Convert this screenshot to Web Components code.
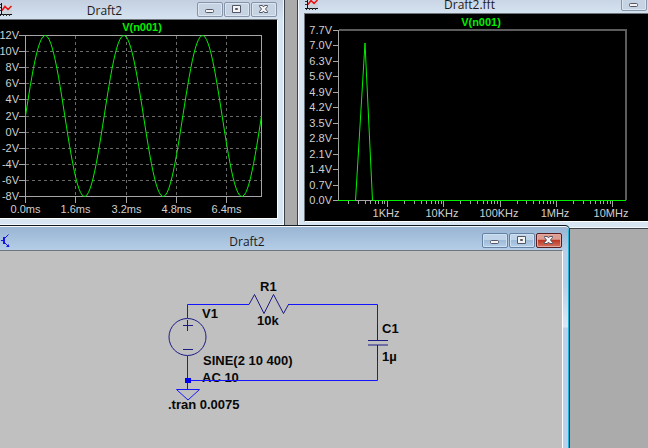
<!DOCTYPE html>
<html lang="en">
<head>
<meta charset="utf-8">
<title>Circuit simulator</title>
<style>
  body { margin: 0; }
</style>
</head>
<body>
<sim-desktop>
  <mdi-window class="wave" caption="Draft2">
    <chart-icon slot="icon"></chart-icon>
    <wave-plot></wave-plot>
  </mdi-window>
  <mdi-window class="fft" caption="Draft2.fft">
    <chart-icon slot="icon"></chart-icon>
    <fft-plot></fft-plot>
  </mdi-window>
  <mdi-window class="schematic" caption="Draft2" active>
    <transistor-icon slot="icon"></transistor-icon>
    <circuit-schematic></circuit-schematic>
  </mdi-window>
</sim-desktop>

<script>
const attach = (el, html) => { el.attachShadow({ mode: 'open' }).innerHTML = html; };

/* Desktop: overlapping windows on a free canvas */
customElements.define('sim-desktop', class extends HTMLElement {
  constructor() {
    super();
    attach(this, `<style>
      :host { display: block; position: relative; height: 100vh; overflow: hidden; background: #ababab; }
      ::slotted(mdi-window) { position: absolute; }
      ::slotted(.wave) { left: -9px; top: -6px; width: 294px; height: 232px; }
      ::slotted(.fft) { left: 297px; top: -12px; width: 412px; height: 241px; }
      ::slotted(.schematic) { left: -9px; top: 225px; width: 579px; bottom: -16px; }
    </style><slot></slot>`);
  }
});

customElements.define('caption-button', class extends HTMLElement {
  connectedCallback() {
    if (this.shadowRoot) return;
    const kind = this.getAttribute('kind');
    const shapes = {
      minimize: '<rect x="8.5" y="7.5" width="8" height="3" rx="1"/>',
      maximize: '<path fill-rule="evenodd" d="M8.5 3.5h8v7h-8zM11.5 6.5v1h2v-1z"/>',
      close: '<path d="M8.5 3.5h3l1 1.5 1-1.5h3v1L14.500 7l2 2.500v1h-3l-1-1.500-1 1.500h-3v-1l2-2.500-2-2.500z"/>'
    };
    attach(this, `<style>
      :host { display: block; }
      button { display: block; box-sizing: border-box; width: 26px; height: 15px; padding: 0;
        border: 1px solid #8793a9; border-radius: 2px; background: #c6d3e3;
        box-shadow: inset 0 0 0 1px #dce6f1; }
      :host([active]) button { border-color: #6481a4; background: linear-gradient(#bfd4e9 45%, #9ebbd8 50%, #b5cfe8);
        box-shadow: inset 0 0 0 1px #cfe0f0; }
      :host([active][kind=close]) button { border-color: #571d20; background: linear-gradient(#dd9d91 40%, #bd3825 50%, #d47460);
        box-shadow: inset 0 0 0 1px #e2a99f; }
      svg { display: block; margin: -1px; width: 26px; height: 15px; fill: #f4f4f4; stroke: #535666; }
    </style>
    <button type="button" aria-label="${kind}"><svg viewBox="0 0 26 15">${shapes[kind]}</svg></button>`);
  }
});

customElements.define('mdi-window', class extends HTMLElement {
  connectedCallback() {
    if (this.shadowRoot) return;
    const active = this.hasAttribute('active') ? 'active' : '';
    attach(this, `<style>
      :host { display: flex; flex-direction: column; box-sizing: border-box; padding: 0 6px 6px;
        border: 1px solid #3c4048; border-radius: 5px 5px 0 0;
        background: linear-gradient(#bfcbdc, #d7e4f2 26px); box-shadow: inset 0 0 0 1px #f4f8fc; }
      :host([active]) { border-color: #101820; border-right-color: #164350;
        background: linear-gradient(#98b4d2, #b7d0e9 26px, #b7d0e9 60px, #dbe8f5 101px, #b9d1ea 102px);
        box-shadow: inset 0 1px #f4f8fc, inset -1px 0 #20b4d8; }
      header { display: grid; grid-template-columns: 13px 1fr auto; align-items: start;
        height: 24px; flex: none; padding: 7px 1px 0; box-sizing: border-box; }
      ::slotted([slot=icon]) { margin-top: 1px; }
      h2 { margin: 0; text-align: center; font: 12px/17px "Open Sans", "Noto Sans", sans-serif; color: #1b1b1b; }
      nav { display: flex; gap: 1px; }
      main { flex: 1; min-height: 0; border: 1px solid #fff; border-top-color: #70757b; border-left-color: #70757b; overflow: hidden; }
    </style>
    <header>
      <slot name="icon"></slot>
      <h2>${this.getAttribute('caption')}</h2>
      <nav>
        <caption-button kind="minimize" ${active}></caption-button>
        <caption-button kind="maximize" ${active}></caption-button>
        <caption-button kind="close" ${active}></caption-button>
      </nav>
    </header>
    <main><slot></slot></main>`);
  }
});

customElements.define('chart-icon', class extends HTMLElement {
  constructor() {
    super();
    attach(this, `<style>:host { display: block; } svg { display: block; width: 13px; height: 14px; }</style>
    <svg viewBox="0 0 13 14" fill="none">
      <rect x="2" y="1" width="11" height="10" fill="#ccd3db"/>
      <path d="M2.500 0v12M0 11.500h13" stroke="#111"/>
      <path d="M0 1.500h2M0 4.500h2M0 7.500h2M4.500 11v2M7.500 11v2M10.500 11v2M1.500 12v1" stroke="#333"/>
      <path d="M3 7.500 6 3.500 9 6.500 12.500 3" stroke="#ed1010" stroke-width="1.500"/>
    </svg>`);
  }
});

customElements.define('transistor-icon', class extends HTMLElement {
  constructor() {
    super();
    attach(this, `<style>:host { display: block; } svg { display: block; width: 13px; height: 15px; }</style>
    <svg viewBox="0 0 13 15" fill="none" stroke="#1515e8">
      <path d="M5 3v7" stroke-width="2"/>
      <path d="M2 6.500h3M5.500 4.500 9.500 .5M5.500 8.500l4 4"/>
      <path d="M10.500 13H7l2.500-3z" fill="#1515e8" stroke="none"/>
    </svg>`);
  }
});

const plotStyle = `<style>
  :host { display: block; height: 100%; background: #000; }
  svg { display: block; width: 100%; height: 100%; font: 11px "Liberation Sans", Arial, sans-serif; fill: #d0d0d0; }
  .name { fill: #00f000; font-weight: bold; }
  .axis { stroke: #a6a6a6; fill: none; shape-rendering: crispEdges; }
  .edge { stroke: #5c5c5c; fill: none; stroke-width: 2; shape-rendering: crispEdges; }
  .grid { stroke: #6a6a6a; fill: none; stroke-dasharray: 3 3; shape-rendering: crispEdges; }
  .trace { stroke: #00f000; fill: none; }
  .y { text-anchor: end; } .x, .name { text-anchor: middle; }
</style>`;

/* Time-domain trace: 2 V offset, 10 V amplitude, 400 Hz */
customElements.define('wave-plot', class extends HTMLElement {
  constructor() {
    super();
    const L = 25.5, R = 261.5, T = 35.5, B = 196.5;
    const px = ms => L + ms * (R - L) / 7.5;
    const py = v => T + (12 - v) * (B - T) / 20;
    let axis = `M${L} ${T}H${R}V${B}H${L}z`, grid = '', text = '', trace = '';
    for (let v = 12; v >= -8; v -= 2) {
      const y = Math.floor(py(v)) + .5;
      axis += `M19 ${y}H${L}`;
      if (v < 12 && v > -8) grid += `M${L} ${y}H${R}`;
      text += `<text class="y" x="19" y="${y + 3.5}">${v}V</text>`;
    }
    for (let i = 0; i < 5; i++) {
      const x = Math.floor(px(i * 1.6)) + .5;
      axis += `M${x} ${B}v6`;
      if (i) grid += `M${x} ${T}V${B}`;
      text += `<text class="x" x="${x}" y="213">${(i * 1.6).toFixed(1)}ms</text>`;
    }
    for (let t = 0; t <= 7.5; t += .05) {
      trace += `${px(t)},${py(2 + 10 * Math.sin(2 * Math.PI * .4 * t))} `;
    }
    attach(this, `${plotStyle}<svg viewBox="-1 20 278 197" preserveAspectRatio="xMinYMin">
      <path class="grid" d="${grid}"/><path class="axis" d="${axis}"/>
      <polyline class="trace" points="${trace}"/>${text}
      <text class="name" x="142" y="31">V(n001)</text></svg>`);
  }
});

/* Spectrum with a logarithmic frequency axis */
customElements.define('fft-plot', class extends HTMLElement {
  constructor() {
    super();
    const L = 338.5, R = 626, T = 30.5, B = 200.5;
    const px = khz => 387.5 + 56.3 * Math.log10(khz);
    let axis = `M${L} ${T}V${B}H${R}`, text = '';
    for (let i = 0; i <= 11; i++) {
      const y = Math.floor(T + i * (B - T) / 11) + .5;
      axis += `M333 ${y}H${L}`;
      text += `<text class="y" x="332" y="${y + 3.5}">${((11 - i) * .7).toFixed(1)}V</text>`;
    }
    for (let d = -1; d <= 4; d++) for (let m = 1; m < 10; m++) {
      const x = px(m * 10 ** d);
      if (x > L && x < R) axis += `M${Math.floor(x) + .5} ${B}v${m === 1 ? 6 : 3}`;
    }
    ['1KHz', '10KHz', '100KHz', '1MHz', '10MHz'].forEach((s, i) => {
      text += `<text class="x" x="${Math.floor(px(10 ** i)) - 1}" y="217">${s}</text>`;
    });
    attach(this, `${plotStyle}<svg viewBox="305 14 396 207" preserveAspectRatio="xMinYMin">
      <path class="edge" d="M${L} 30H${R}V200"/><path class="axis" d="${axis}"/>
      <path class="trace" d="M338 200.500H355.500L365 43L372.500 200.500H626"/>${text}
      <text class="name" x="481" y="26">V(n001)</text></svg>`);
  }
});

customElements.define('circuit-schematic', class extends HTMLElement {
  constructor() {
    super();
    attach(this, `<style>
      :host { display: block; height: 100%; background: #c0c0c0; }
      svg { display: block; width: 100%; height: 100%; font: bold 13px "Liberation Sans", Arial, sans-serif; fill: #080808; }
      .wire { stroke: #1414ff; fill: none; }
      .part { stroke: #1b1b86; fill: none; }
    </style>
    <svg viewBox="-1 251 563 205" preserveAspectRatio="xMinYMin">
      <text x="260" y="291">R1</text>
      <text x="257" y="325">10k</text>
      <text x="202" y="318">V1</text>
      <text x="203" y="365">SINE(2 10 400)</text>
      <text x="202" y="382">AC 10</text>
      <text x="168" y="409">.tran 0.0075</text>
      <text x="382" y="333">C1</text>
      <text x="382" y="361">1µ</text>
      <path class="wire" d="M187.500 318V304.500H249M288 304.500H377.500V324M377.500 361V380.500H187.500M187.500 356V389.500"/>
      <path class="part" d="M249 304.500 254.500 294.500 264 313.500 273.500 294.500 283.500 313.500 288.500 304.500"/>
      <path class="part" d="M377.500 324V340M377.500 345V361M368 340.500H388M368 345H388"/>
      <circle class="part" cx="187.500" cy="337" r="18.500"/>
      <path class="part" d="M183 325.500H193M187.500 320V331M183 349.500H193"/>
      <path class="wire" d="M176.500 389.500H199.500L188 400z"/>
      <rect x="185" y="378" width="6" height="5" fill="#0000f5"/>
    </svg>`);
  }
});
</script>
</body>
</html>
